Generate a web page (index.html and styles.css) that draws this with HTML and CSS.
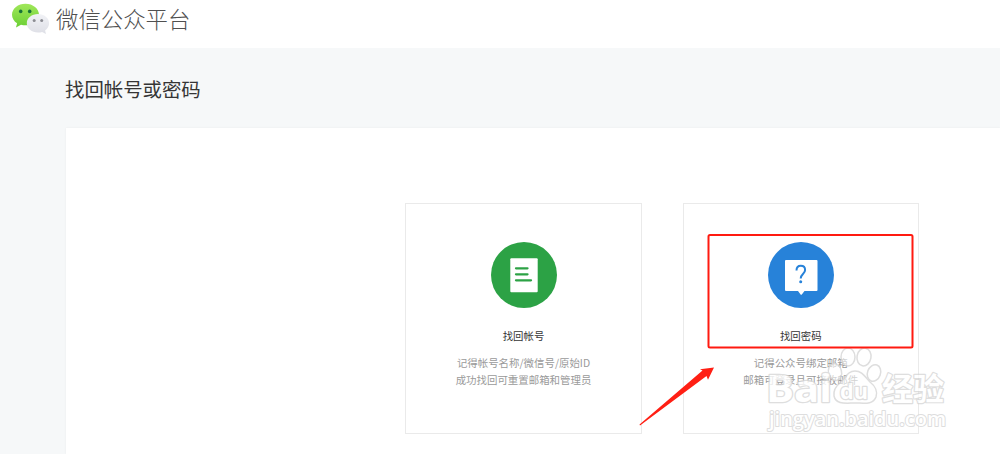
FILE: index.html
```html
<!DOCTYPE html>
<html lang="zh-CN">
  <head>
    <meta charset="utf-8">
    <title>微信公众平台</title>
    <link rel="stylesheet" href="styles.css">
  </head>
  <body>
    <header class="header">
      <svg class="logo" width="38" height="32" viewBox="0 0 38 32">
        <defs>
          <linearGradient id="green" x1="0" y1="0" x2="0" y2="1">
            <stop offset="0" stop-color="#a0e75a" />
            <stop offset="1" stop-color="#6bcf34" />
          </linearGradient>
          <linearGradient id="gray" x1="0" y1="0" x2="0" y2="1">
            <stop offset="0" stop-color="#f1f2f6" />
            <stop offset="1" stop-color="#dedfe6" />
          </linearGradient>
        </defs>
        <path fill="url(#green)" d="M13.5 .8C6 .8 0 5.7 0 11.7c0 3.500 2 6.600 5.100 8.600L4 24.500l5-2.800c1.500.4 3 .6 4.500.6 7.500 0 13.500-4.700 13.500-10.600S21 .8 13.500 .8z" />
        <circle class="eye-green" cx="8.700" cy="8.400" r="1.800" />
        <circle class="eye-green" cx="17.700" cy="8.400" r="1.800" />
        <path fill="url(#gray)" d="M26 11.100c-6.300 0-11.200 4-11.200 9.200s4.900 9.200 11.200 9.200c1.500 0 2.800-.2 4.100-.6l3.900 2-.9-3.400c2.500-1.700 4-4.300 4-7.200 0-5.200-4.900-9.200-11.100-9.200z" />
        <circle class="eye-gray" cx="22.200" cy="17.400" r="1.500" />
        <circle class="eye-gray" cx="29.700" cy="17.400" r="1.500" />
      </svg>
      <span class="brand">微信公众平台</span>
    </header>

    <main class="main">
      <h1 class="title">找回帐号或密码</h1>
      <div class="panel">
        <a class="card">
          <svg class="card-icon" width="66" height="66" viewBox="0 0 66 66">
            <circle cx="33" cy="33" r="33" fill="#2ca245" />
            <rect x="19.300" y="16.300" width="27.400" height="34" rx="1" fill="#fff" />
            <path d="M25 26.300h11.500M25 32.300h11.500M25 38.300h15" stroke="#2ca245" stroke-width="2.300" stroke-linecap="round" />
          </svg>
          <h2 class="card-title">找回帐号</h2>
          <p class="card-desc">记得帐号名称/微信号/原始ID<br>成功找回可重置邮箱和管理员</p>
        </a>
        <a class="card">
          <svg class="card-icon" width="66" height="66" viewBox="0 0 66 66">
            <circle cx="33" cy="33" r="33" fill="#2782d9" />
            <path d="M18 18h30.500q1 0 1 1v29q0 1-1 1H36.500l-2.500 3.300q-.8 1-1.600 0L30 49H18q-1 0-1-1V19q0-1 1-1z" fill="#fff" />
            <path d="M28.500 28.500c0-3 1.700-4.700 4.300-4.700s4.300 1.600 4.300 4.200c0 4-4.400 4.200-4.400 8.500" fill="none" stroke="#2782d9" stroke-width="2" />
            <circle cx="32.700" cy="39.800" r="1.500" fill="#2782d9" />
          </svg>
          <h2 class="card-title">找回密码</h2>
          <p class="card-desc">记得公众号绑定邮箱<br>邮箱可登录且可接收邮件</p>
        </a>
      </div>
    </main>

    <!-- watermark -->
    <svg class="watermark" width="190" height="92" viewBox="762 344 190 92">
      <g class="mark">
        <ellipse cx="835" cy="372" rx="6.500" ry="8.500" transform="rotate(-15 835 372)" />
        <ellipse cx="848" cy="357" rx="7" ry="9" />
        <ellipse cx="864" cy="357" rx="7" ry="9" transform="rotate(10 864 357)" />
        <ellipse cx="874" cy="373" rx="6.500" ry="8.500" transform="rotate(20 874 373)" />
        <path d="M855 371c-7 0-9 6-14 11-5 4-8 8-7 14 2 9 12 7 21 7s18 2 21-6c2-7-1-11-6-15-5-5-8-11-15-11z" />
        <text class="mark-latin" x="766" y="401.500" textLength="66" lengthAdjust="spacingAndGlyphs">Bai</text>
        <text class="mark-du" x="840" y="399" textLength="28" lengthAdjust="spacingAndGlyphs">du</text>
        <text class="mark-cn" x="882" y="400" textLength="62" lengthAdjust="spacingAndGlyphs">经验</text>
        <text class="mark-url" x="769" y="426" textLength="177" lengthAdjust="spacingAndGlyphs">jingyan.baidu.com</text>
      </g>
    </svg>

    <!-- red box and arrow over the second card -->
    <svg class="pointer" width="280" height="200" viewBox="636 230 280 200">
      <rect x="708.500" y="235" width="204" height="112.500" rx="1.500" />
      <path d="M639.500 424.500L702.500 370.500 700 369.300 714 367.500 708 379.800 706.500 376 640 425.500z" />
    </svg>
  </body>
</html>
```

FILE: styles.css
```css
body {
  margin: 0;
  height: 454px;
  overflow: hidden;
  background-color: #f6f8f9;
  color: #353535;
  font-family: "Noto Sans CJK SC", sans-serif;
}

.header {
  display: flex;
  align-items: flex-start;
  height: 48px;
  padding-left: 12px;
  background-color: #fff;
}

.logo {
  margin-top: 3px;
}

.eye-green {
  fill: #187238;
}

.eye-gray {
  fill: #8c8d93;
}

.brand {
  margin-left: 6px;
  color: #505050;
  font-size: 22.4px;
  font-weight: 300;
  line-height: 36px;
}

.main {
  padding-left: 66px;
}

.title {
  margin: 0 0 0 -1px;
  height: 80px;
  font-size: 19.4px;
  font-weight: 400;
  line-height: 82px;
}

.panel {
  box-sizing: border-box;
  display: flex;
  gap: 40.5px;
  height: 326px;
  padding: 75px 0 0 339px;
  background-color: #fff;
  box-shadow: 0 0 2px rgba(0, 0, 0, 0.06);
}

.card {
  box-sizing: border-box;
  flex: none;
  width: 237px;
  height: 231px;
  padding-top: 38px;
  border: 1px solid #eaeaea;
  text-align: center;
}

.card + .card {
  width: 236.5px;
}

.card-icon {
  display: block;
  margin: 0 auto;
}

.card-title {
  margin: 20px 0 0;
  font-size: 10.4px;
  font-weight: 400;
  line-height: 16px;
}

.card-desc {
  margin: 11px 0 0;
  color: #9a9a9a;
  font-size: 10.45px;
  line-height: 16.5px;
}

.watermark {
  position: absolute;
  top: 344px;
  left: 762px;
}

.mark {
  fill: #fff;
  stroke: #d6d6d6;
  stroke-width: 2.4;
  stroke-linejoin: round;
  paint-order: stroke;
  opacity: 0.8;
}

.mark ellipse,
.mark path {
  fill-opacity: 0.7;
  stroke-width: 1.5;
  paint-order: normal;
}

.mark-latin,
.mark-du,
.mark-url {
  font-family: "Open Sans", sans-serif;
}

.mark-latin {
  font-size: 38px;
  font-weight: 700;
}

.mark-du {
  font-size: 21px;
  font-weight: 700;
}

.mark-cn {
  font-size: 31px;
  font-weight: 700;
}

.mark-url {
  font-size: 20px;
  font-weight: 600;
  stroke-width: 2;
}

.pointer {
  position: absolute;
  top: 230px;
  left: 636px;
}

.pointer rect {
  fill: none;
  stroke: #ff1a10;
  stroke-width: 2;
}

.pointer path {
  fill: #ff1f14;
}
```
